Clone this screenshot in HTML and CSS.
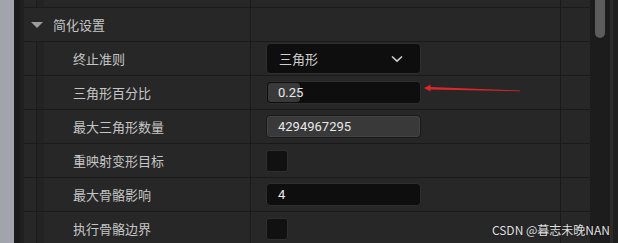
FILE: index.html
```html
<!DOCTYPE html>
<html lang="zh">
<head>
  <meta charset="utf-8" />
  <title>简化设置</title>
  <link rel="stylesheet" href="styles.css">
</head>
<body>
  <div class="screen">
    <div class="desk"></div>
    <div class="edge"></div>

    <div class="details">
      <!-- row cut off at the top -->
      <div class="row row-cut">
        <div class="name"><span class="guide"></span></div>
        <div class="value"></div>
        <div class="extra"></div>
      </div>

      <div class="row row-head">
        <div class="name">
          <span class="caret"></span>
          <span class="group-title">简化设置</span>
        </div>
        <div class="value"></div>
        <div class="extra"></div>
      </div>

      <div class="row">
        <div class="name"><span class="guide"></span><span class="label">终止准则</span></div>
        <div class="value">
          <div class="combo">
            <span>三角形</span>
            <svg class="chevron" width="12" height="8" viewBox="0 0 12 8">
              <path d="M1 1.5 L6 6.2 L11 1.5" fill="none" stroke="#d0d0d0" stroke-width="1.6"/>
            </svg>
          </div>
        </div>
        <div class="extra"></div>
      </div>

      <div class="row">
        <div class="name"><span class="guide"></span><span class="label">三角形百分比</span></div>
        <div class="value">
          <div class="field">
            <span class="fill" style="width: 21%"></span>
            <span class="num">0.25</span>
          </div>
        </div>
        <div class="extra"></div>
      </div>

      <div class="row">
        <div class="name"><span class="guide"></span><span class="label">最大三角形数量</span></div>
        <div class="value">
          <div class="field field-full">
            <span class="num">4294967295</span>
          </div>
        </div>
        <div class="extra"></div>
      </div>

      <div class="row">
        <div class="name"><span class="guide"></span><span class="label">重映射变形目标</span></div>
        <div class="value"><span class="check"></span></div>
        <div class="extra"></div>
      </div>

      <div class="row">
        <div class="name"><span class="guide"></span><span class="label">最大骨骼影响</span></div>
        <div class="value">
          <div class="field">
            <span class="num">4</span>
          </div>
        </div>
        <div class="extra"></div>
      </div>

      <div class="row">
        <div class="name"><span class="guide"></span><span class="label">执行骨骼边界</span></div>
        <div class="value"><span class="check"></span></div>
        <div class="extra"></div>
      </div>
    </div>

    <div class="scroll">
      <div class="track"><span class="thumb"></span></div>
      <div class="rail"></div>
    </div>

    <!-- annotation arrow pointing at the percentage field -->
    <svg class="arrow" width="100" height="10" viewBox="0 0 100 10">
      <polygon points="0,4 7,0.5 6,3 96,6.6 96,7.2 6,5.6 7,7.5" fill="#e3262c"/>
    </svg>

    <div class="mark">CSDN @暮志未晚NAN</div>
  </div>
</body>
</html>
```

FILE: styles.css
```css
* {
    margin: 0;
    padding: 0;
    box-sizing: border-box;
}

body {
    background-color: #1c1c1c;
    font-family: "Roboto", "Noto Sans CJK SC", sans-serif;
}

.screen {
    position: relative;
    display: flex;
    width: 618px;
    height: 243px;
    overflow: hidden;
}

.desk {
    width: 14px;
    background-color: #a1a5ab;
}

.edge {
    width: 10px;
    background: linear-gradient(to right, #1b1b1b 6px, #202020 6px);
}

.details {
    flex: 1;
    display: flex;
    flex-direction: column;
    background-color: #272727;
}

.row {
    display: flex;
    height: 34px;
    flex-shrink: 0;
    border-bottom: 1px solid #1a1a1a;
}

.row-cut {
    height: 8px;
}

.name {
    display: flex;
    align-items: center;
    width: 227px;
    padding-left: 12px;
    border-right: 1px solid #1b1b1b;
}

.value {
    display: flex;
    align-items: center;
    width: 310px;
    padding-left: 15px;
    border-right: 1px solid #1b1b1b;
}

.extra {
    flex: 1;
}

.guide {
    align-self: stretch;
    width: 8px;
    border-left: 1px solid #1c1c1c;
    background-color: #232323;
}

.label {
    margin-left: 29px;
    font-size: 13px;
    color: #c6c6c6;
}

/* group header */
.row-head .name {
    padding-left: 7px;
}

.caret {
    width: 0;
    height: 0;
    border-left: 6px solid transparent;
    border-right: 6px solid transparent;
    border-top: 6px solid #9c9c9c;
}

.group-title {
    margin-left: 10px;
    font-size: 13px;
    color: #c6c6c6;
}

/* value widgets */
.combo {
    display: flex;
    align-items: center;
    justify-content: space-between;
    width: 155px;
    height: 31px;
    padding: 0 17px 0 12px;
    background-color: #0e0e0e;
    border: 1px solid #2f2f2f;
    border-radius: 4px;
    font-size: 13px;
    color: #cfcfcf;
}

.field {
    position: relative;
    display: flex;
    align-items: center;
    width: 155px;
    height: 23px;
    padding-left: 11px;
    background-color: #0e0e0e;
    border: 1px solid #2e2e2e;
    border-radius: 4px;
}

.field-full {
    background-color: #393939;
    border-color: #1a1a1a;
    box-shadow: inset 0 0 0 1px #444444;
}

.fill {
    position: absolute;
    left: 1px;
    top: 1px;
    bottom: 1px;
    background-color: #393939;
    border-radius: 3px;
}

.num {
    position: relative;
    font-size: 13px;
    color: #e8e8e8;
}

.check {
    width: 22px;
    height: 22px;
    background-color: #111111;
    border: 1px solid #2f2f2f;
    border-radius: 3px;
}

/* scrollbar */
.scroll {
    display: flex;
    width: 28px;
}

.track {
    width: 20px;
    padding-left: 5px;
    background-color: #1c1c1c;
}

.thumb {
    display: block;
    width: 10px;
    height: 38px;
    background-color: #5c5c5c;
    border-radius: 0 0 5px 5px;
}

.rail {
    width: 3px;
    background-color: #2b2b2b;
    border-right: 5px solid #1f1f1f;
    box-sizing: content-box;
}

.arrow {
    position: absolute;
    left: 424px;
    top: 84px;
}

.mark {
    position: absolute;
    right: 8px;
    bottom: 5px;
    font-family: "Noto Sans CJK SC", sans-serif;
    font-size: 12px;
    color: #e4e4e4;
    text-shadow: 0 0 1px #000;
}
```
